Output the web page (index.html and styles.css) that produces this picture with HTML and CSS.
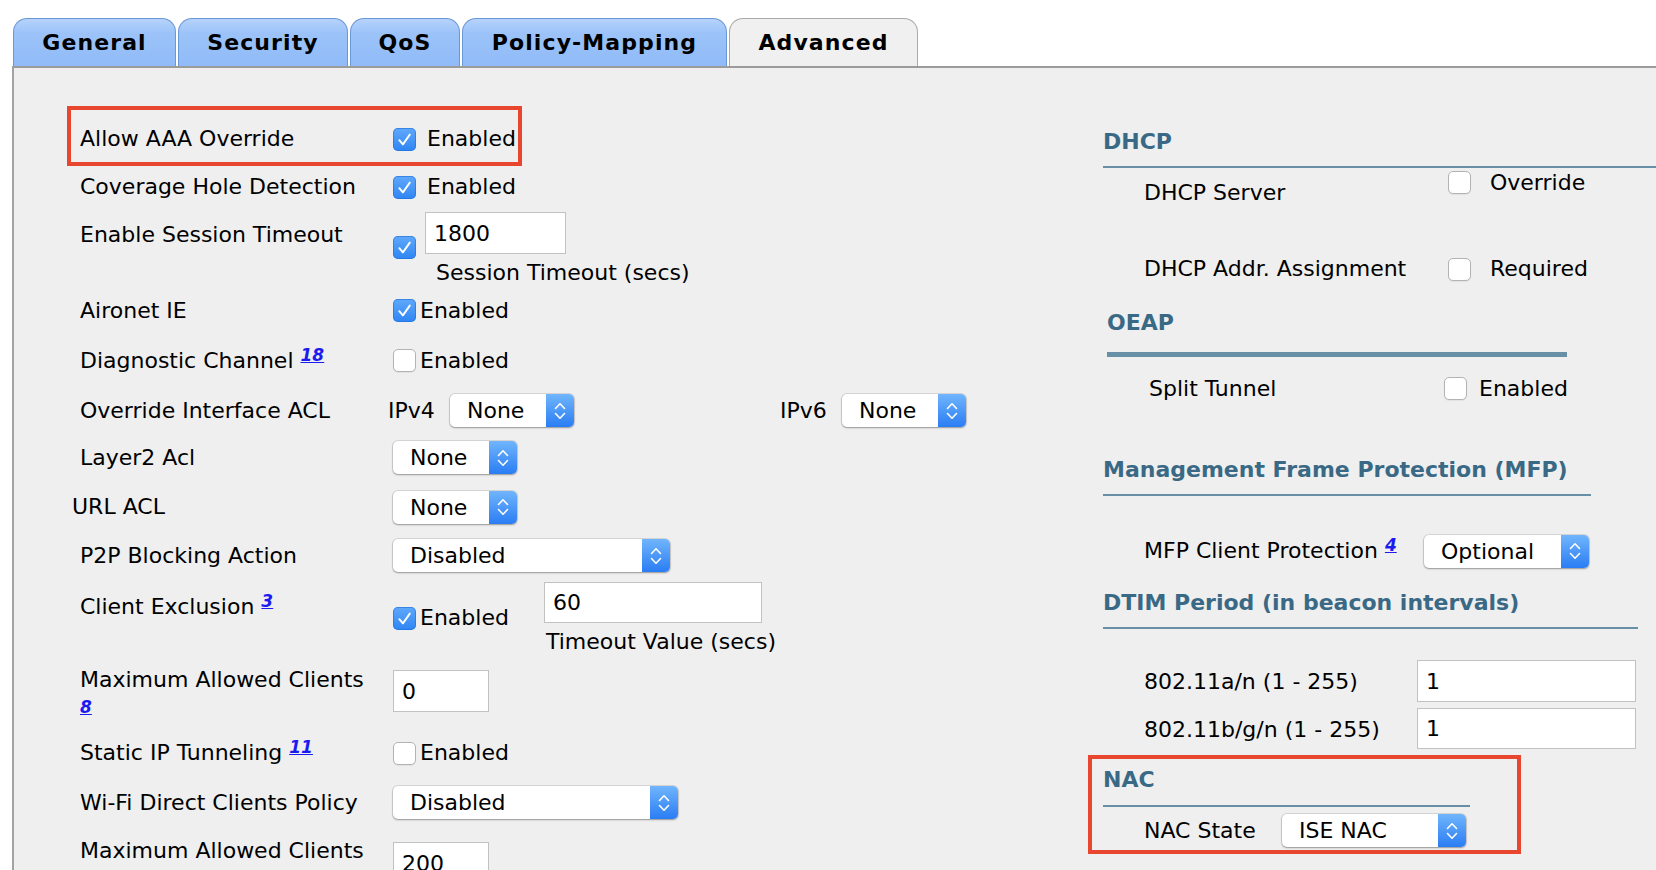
FILE: index.html
```html
<!DOCTYPE html>
<html>
<head>
<meta charset="utf-8">
<title>WLAN Advanced</title>
<link rel="stylesheet" href="styles.css">
</head>
<body>
<div class="tabs">
  <div class="tab tab--general">General</div>
  <div class="tab tab--security">Security</div>
  <div class="tab tab--qos">QoS</div>
  <div class="tab tab--policy">Policy-Mapping</div>
  <div class="tab tab--advanced tab--active">Advanced</div>
</div>
<div class="panel">
  <div class="col-left">
    <div class="row row--boxed">
      <div class="label">Allow AAA Override</div>
      <div class="ctrl"><span class="cb cb--on"><svg viewBox="0 0 23 23"><path d="M6.3 12.2 L9.9 16.4 L16.8 6.6" fill="none" stroke="#fff" stroke-width="1.9" stroke-linecap="round" stroke-linejoin="round"/></svg></span><span class="cb-label">Enabled</span></div>
    </div>
    <div class="row row--coverage">
      <div class="label">Coverage Hole Detection</div>
      <div class="ctrl"><span class="cb cb--on"><svg viewBox="0 0 23 23"><path d="M6.3 12.2 L9.9 16.4 L16.8 6.6" fill="none" stroke="#fff" stroke-width="1.9" stroke-linecap="round" stroke-linejoin="round"/></svg></span><span class="cb-label">Enabled</span></div>
    </div>
    <div class="row row--session">
      <div class="label label--session">Enable Session Timeout</div>
      <div class="ctrl ctrl--top">
        <span class="cb cb--on cb--session"><svg viewBox="0 0 23 23"><path d="M6.3 12.2 L9.9 16.4 L16.8 6.6" fill="none" stroke="#fff" stroke-width="1.9" stroke-linecap="round" stroke-linejoin="round"/></svg></span>
        <div class="field-group field-group--session">
          <input class="field field--session" type="text" value="1800">
          <div class="field-caption field-caption--session">Session Timeout (secs)</div>
        </div>
      </div>
    </div>
    <div class="row row--aironet">
      <div class="label">Aironet IE</div>
      <div class="ctrl"><span class="cb cb--on"><svg viewBox="0 0 23 23"><path d="M6.3 12.2 L9.9 16.4 L16.8 6.6" fill="none" stroke="#fff" stroke-width="1.9" stroke-linecap="round" stroke-linejoin="round"/></svg></span><span class="cb-label cb-label--tight">Enabled</span></div>
    </div>
    <div class="row row--diag">
      <div class="label">Diagnostic Channel <a class="fn">18</a></div>
      <div class="ctrl"><span class="cb cb--off"></span><span class="cb-label cb-label--tight">Enabled</span></div>
    </div>
    <div class="row row--acl">
      <div class="label">Override Interface ACL</div>
      <div class="ctrl ctrl--acl">
        <span class="ip-label">IPv4</span>
        <div class="select select--small"><span class="select__value">None</span><span class="select__btn"><svg viewBox="0 0 14 22" width="14" height="22"><path d="M2.5 8.5 L7 3.8 L11.5 8.5 M2.5 13.5 L7 18.2 L11.5 13.5" fill="none" stroke="#fff" stroke-width="1.6" stroke-linecap="round" stroke-linejoin="round"/></svg></span></div>
        <span class="ip-label ip-label--v6">IPv6</span>
        <div class="select select--small"><span class="select__value">None</span><span class="select__btn"><svg viewBox="0 0 14 22" width="14" height="22"><path d="M2.5 8.5 L7 3.8 L11.5 8.5 M2.5 13.5 L7 18.2 L11.5 13.5" fill="none" stroke="#fff" stroke-width="1.6" stroke-linecap="round" stroke-linejoin="round"/></svg></span></div>
      </div>
    </div>
    <div class="row row--layer2">
      <div class="label">Layer2 Acl</div>
      <div class="ctrl"><div class="select select--small"><span class="select__value">None</span><span class="select__btn"><svg viewBox="0 0 14 22" width="14" height="22"><path d="M2.5 8.5 L7 3.8 L11.5 8.5 M2.5 13.5 L7 18.2 L11.5 13.5" fill="none" stroke="#fff" stroke-width="1.6" stroke-linecap="round" stroke-linejoin="round"/></svg></span></div></div>
    </div>
    <div class="row row--url">
      <div class="label label--url">URL ACL</div>
      <div class="ctrl"><div class="select select--small"><span class="select__value">None</span><span class="select__btn"><svg viewBox="0 0 14 22" width="14" height="22"><path d="M2.5 8.5 L7 3.8 L11.5 8.5 M2.5 13.5 L7 18.2 L11.5 13.5" fill="none" stroke="#fff" stroke-width="1.6" stroke-linecap="round" stroke-linejoin="round"/></svg></span></div></div>
    </div>
    <div class="row row--p2p">
      <div class="label">P2P Blocking Action</div>
      <div class="ctrl"><div class="select select--p2p"><span class="select__value">Disabled</span><span class="select__btn"><svg viewBox="0 0 14 22" width="14" height="22"><path d="M2.5 8.5 L7 3.8 L11.5 8.5 M2.5 13.5 L7 18.2 L11.5 13.5" fill="none" stroke="#fff" stroke-width="1.6" stroke-linecap="round" stroke-linejoin="round"/></svg></span></div></div>
    </div>
    <div class="row row--exclusion">
      <div class="label label--exclusion">Client Exclusion <a class="fn">3</a></div>
      <div class="ctrl ctrl--top">
        <div class="cb-group cb-group--exclusion"><span class="cb cb--on"><svg viewBox="0 0 23 23"><path d="M6.3 12.2 L9.9 16.4 L16.8 6.6" fill="none" stroke="#fff" stroke-width="1.9" stroke-linecap="round" stroke-linejoin="round"/></svg></span><span class="cb-label cb-label--tight">Enabled</span></div>
        <div class="field-group field-group--exclusion">
          <input class="field field--exclusion" type="text" value="60">
          <div class="field-caption field-caption--exclusion">Timeout Value (secs)</div>
        </div>
      </div>
    </div>
    <div class="row row--maxclients">
      <div class="label label--maxclients">Maximum Allowed Clients<br><a class="fn fn--inline">8</a></div>
      <div class="ctrl ctrl--top"><input class="field field--small field--maxclients" type="text" value="0"></div>
    </div>
    <div class="row row--static">
      <div class="label">Static IP Tunneling <a class="fn">11</a></div>
      <div class="ctrl"><span class="cb cb--off"></span><span class="cb-label cb-label--tight">Enabled</span></div>
    </div>
    <div class="row row--wifi">
      <div class="label">Wi-Fi Direct Clients Policy</div>
      <div class="ctrl"><div class="select select--wifi"><span class="select__value">Disabled</span><span class="select__btn"><svg viewBox="0 0 14 22" width="14" height="22"><path d="M2.5 8.5 L7 3.8 L11.5 8.5 M2.5 13.5 L7 18.2 L11.5 13.5" fill="none" stroke="#fff" stroke-width="1.6" stroke-linecap="round" stroke-linejoin="round"/></svg></span></div></div>
    </div>
    <div class="row row--max2">
      <div class="label label--max2">Maximum Allowed Clients</div>
      <div class="ctrl ctrl--top"><input class="field field--small field--max2" type="text" value="200"></div>
    </div>
  </div>

  <div class="col-right">
    <div class="sec-head sec-head--dhcp">DHCP</div>
    <div class="rrow rrow--dhcp-server">
      <div class="rlabel rlabel--dhcp rlabel--server">DHCP Server</div>
      <span class="cb cb--off cb--server"></span>
      <span class="rcb-label rcb-label--server">Override</span>
    </div>
    <div class="rrow rrow--dhcp-addr">
      <div class="rlabel rlabel--dhcp">DHCP Addr. Assignment</div>
      <span class="cb cb--off"></span>
      <span class="rcb-label">Required</span>
    </div>
    <div class="sec-head sec-head--oeap">OEAP</div>
    <div class="rrow rrow--split">
      <div class="rlabel rlabel--split">Split Tunnel</div>
      <span class="cb cb--off"></span>
      <span class="rcb-label rcb-label--split">Enabled</span>
    </div>
    <div class="sec-head sec-head--mfp">Management Frame Protection (MFP)</div>
    <div class="rrow rrow--mfp">
      <div class="rlabel rlabel--mfp">MFP Client Protection <a class="fn">4</a></div>
      <div class="select select--mfp"><span class="select__value">Optional</span><span class="select__btn"><svg viewBox="0 0 14 22" width="14" height="22"><path d="M2.5 8.5 L7 3.8 L11.5 8.5 M2.5 13.5 L7 18.2 L11.5 13.5" fill="none" stroke="#fff" stroke-width="1.6" stroke-linecap="round" stroke-linejoin="round"/></svg></span></div>
    </div>
    <div class="sec-head sec-head--dtim">DTIM Period (in beacon intervals)</div>
    <div class="rrow rrow--dtim-a">
      <div class="rlabel rlabel--dtim">802.11a/n (1 - 255)</div>
      <input class="field field--dtim" type="text" value="1">
    </div>
    <div class="rrow rrow--dtim-b">
      <div class="rlabel rlabel--dtim">802.11b/g/n (1 - 255)</div>
      <input class="field field--dtim field--dtim-b" type="text" value="1">
    </div>
    <div class="nac-box">
      <div class="sec-head sec-head--nac">NAC</div>
      <div class="rrow rrow--nac">
        <div class="rlabel rlabel--nac">NAC State</div>
        <div class="select select--nac"><span class="select__value">ISE NAC</span><span class="select__btn"><svg viewBox="0 0 14 22" width="14" height="22"><path d="M2.5 8.5 L7 3.8 L11.5 8.5 M2.5 13.5 L7 18.2 L11.5 13.5" fill="none" stroke="#fff" stroke-width="1.6" stroke-linecap="round" stroke-linejoin="round"/></svg></span></div>
      </div>
    </div>
  </div>
</div>
</body>
</html>
```

FILE: styles.css
```css
* { box-sizing: border-box; }
html, body { margin: 0; padding: 0; }
body {
  width: 1656px;
  height: 870px;
  overflow: hidden;
  background: #fff;
  font-family: Verdana, "DejaVu Sans", sans-serif;
  font-size: 22px;
  line-height: 26px;
  color: #000;
}

/* ---------- tabs ---------- */
.tabs {
  display: flex;
  gap: 2px;
  height: 66px;
  padding: 18px 0 0 13px;
}
.tab {
  height: 48px;
  border: 1.5px solid #6a97d6;
  border-bottom: none;
  border-radius: 14px 14px 0 0;
  background: linear-gradient(#b6d3fb 0%, #9cc3f9 30%, #90bbf8 100%);
  font-weight: bold;
  letter-spacing: 1.1px;
  display: flex;
  align-items: center;
  justify-content: center;
  padding-top: 0;
}
.tab--general { width: 163px; }
.tab--security { width: 170px; }
.tab--qos { width: 110px; }
.tab--policy { width: 265px; }
.tab--advanced { width: 189px; }
.tab--active {
  background: #f0f0f0;
  border-color: #a9a9a9;
}

/* ---------- panel ---------- */
.panel {
  display: flex;
  margin-left: 12px;
  height: 804px;
  background: #efefef;
  border-top: 2px solid #9b9b9b;
  border-left: 2px solid #a3a3a3;
}
.col-left {
  flex: none;
  width: 1089px;
  padding: 38px 0 0 53px;
}
.col-right {
  flex: 1;
  padding-top: 61px;
}

/* ---------- left rows ---------- */
.row {
  display: grid;
  grid-template-columns: 313px auto;
  align-items: center;
  padding-left: 13px;
}
.row--boxed {
  width: 455px;
  height: 60px;
  border: 4px solid #e9462f;
  padding-left: 9px;
  padding-top: 6px;
}
.row--coverage { height: 42px; }
.row--session { height: 79px; align-items: start; }
.row--aironet { height: 47px; }
.row--diag { height: 53px; }
.row--acl { height: 47px; }
.row--layer2 { height: 47px; }
.row--url { height: 52px; }
.row--p2p { height: 45px; }
.row--exclusion { height: 77px; align-items: start; }
.row--maxclients { height: 73px; align-items: start; }
.row--static { height: 50px; }
.row--wifi { height: 49px; }
.row--max2 { height: 60px; align-items: start; }

.label { white-space: nowrap; }
.label--session { margin-top: 14px; }
.label--url { margin-left: -8px; }
.label--exclusion { margin-top: 16px; }
.label--maxclients { margin-top: 12px; line-height: 25.5px; }
.label--max2 { margin-top: 11px; }

.ctrl { display: flex; align-items: center; }
.ctrl--top { align-items: flex-start; }
.ctrl--acl { margin-left: -5px; }

/* checkboxes */
.cb {
  flex: none;
  display: inline-flex;
  width: 23px;
  height: 23px;
  border-radius: 5px;
}
.cb svg { width: 23px; height: 23px; }
.cb--on {
  background: linear-gradient(#60a9fb, #2f85f4);
  box-shadow: inset 0 0 0 1px rgba(30, 110, 220, 0.6);
}
.cb--off {
  background: #fff;
  border: 1px solid #b3b3b3;
  box-shadow: 0 1px 1px rgba(0, 0, 0, 0.06);
}
.cb--session { margin-top: 28px; }
.cb-label { margin-left: 11px; }
.cb-label--tight { margin-left: 4px; }

.cb-group { display: flex; align-items: center; }
.cb-group--exclusion { width: 151px; margin-top: 27px; }

/* text fields */
.field {
  display: block;
  height: 42px;
  margin: 0;
  background: #fff;
  border: 1px solid #c2c2c2;
  padding: 0 0 0 8px;
  font: inherit;
  color: #000;
  outline: none;
}
.field-group--session { margin: 4px 0 0 9px; }
.field--session { width: 141px; }
.field-caption { margin-top: 6px; white-space: nowrap; }
.field-caption--session { padding-left: 11px; }
.field-group--exclusion { margin-top: 4px; }
.field--exclusion { width: 218px; height: 41px; }
.field-caption--exclusion { padding-left: 2px; }
.field--small { width: 96px; }
.field--maxclients { margin-top: 15px; }
.field--max2 { margin-top: 15px; }

/* selects */
.select {
  display: flex;
  height: 33px;
  background: #fff;
  border-radius: 5px;
  overflow: hidden;
  box-shadow: 0 0 0 1px rgba(0, 0, 0, 0.1), 0 1px 2px rgba(0, 0, 0, 0.3);
}
.select__value {
  flex: 1;
  padding-left: 17px;
  line-height: 33px;
  white-space: nowrap;
}
.select__btn {
  flex: none;
  width: 28px;
  display: flex;
  align-items: center;
  justify-content: center;
  background: linear-gradient(#70b5fc, #2a7df4);
}
.select--small { width: 124px; }
.select--p2p { width: 277px; }
.select--wifi { width: 285px; }
.select--mfp { width: 165px; }
.select--nac { width: 184px; }

.ip-label { width: 62px; flex: none; }
.ip-label--v6 { margin-left: 206px; }

/* footnote links */
.fn {
  font-size: 17px;
  font-weight: bold;
  font-style: italic;
  color: #1b1bf0;
  text-decoration: underline;
  vertical-align: 7px;
  line-height: 0;
}
.fn--inline { vertical-align: baseline; }

/* ---------- right column ---------- */
.sec-head {
  font-weight: bold;
  color: #3a6985;
  line-height: 26px;
  white-space: nowrap;
}
.sec-head--dhcp {
  padding-bottom: 11px;
  border-bottom: 2px solid #6790a7;
}
.sec-head--oeap {
  margin: 16px 0 0 4px;
  width: 460px;
  padding-bottom: 16px;
  border-bottom: 5px solid #6790a7;
}
.sec-head--mfp {
  margin-top: 37px;
  width: 488px;
  padding-bottom: 11px;
  border-bottom: 2px solid #6790a7;
}
.sec-head--dtim {
  margin-top: 14px;
  width: 535px;
  padding-bottom: 11px;
  border-bottom: 2px solid #6790a7;
}
.sec-head--nac {
  width: 367px;
  padding-bottom: 12px;
  border-bottom: 2px solid #6790a7;
}

.rrow { display: flex; align-items: center; }
.rlabel { flex: none; padding-left: 41px; white-space: nowrap; }
.rlabel--dhcp { width: 345px; }
.rlabel--split { width: 341px; padding-left: 46px; }
.rlabel--mfp { width: 321px; }
.rlabel--dtim { width: 314px; padding-top: 2px; }
.rlabel--nac { width: 179px; }

.rrow--dhcp-server { height: 50px; align-items: flex-start; }
.rlabel--server { margin-top: 12px; }
.cb--server { margin-top: 3px; }
.rcb-label { margin-left: 19px; }
.rcb-label--server { margin-top: 2px; }
.rrow--dhcp-addr { height: 50px; margin-top: 26px; }
.rrow--split { height: 63px; }
.rcb-label--split { margin-left: 12px; }
.rrow--mfp { height: 50px; margin-top: 30px; }
.rrow--dtim-a { height: 42px; margin-top: 31px; }
.rrow--dtim-b { height: 41px; margin-top: 6px; }
.field--dtim { width: 219px; }
.field--dtim-b { height: 41px; }

.nac-box {
  width: 433px;
  margin: 6px 0 0 -15px;
  padding: 8px 0 3px 11px;
  border: 4px solid #e9462f;
}
.rrow--nac { height: 33px; margin-top: 7px; }
```
